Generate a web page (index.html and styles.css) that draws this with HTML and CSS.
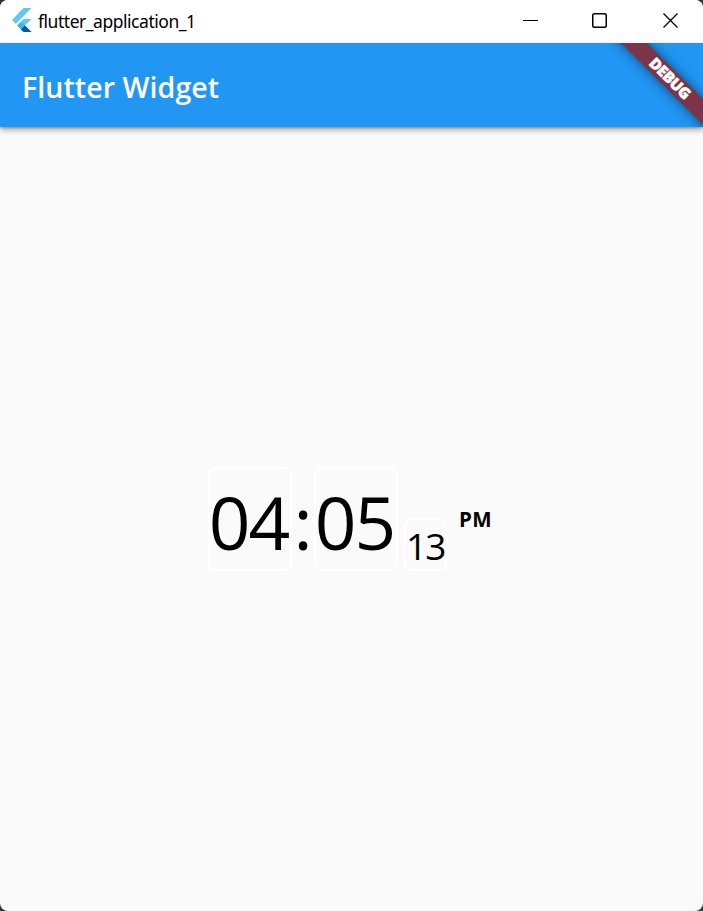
FILE: index.html
```html
<!DOCTYPE html>
<html lang="en">
<head>
<meta charset="utf-8">
<title>flutter_application_1</title>
<link rel="stylesheet" href="styles.css">
</head>
<body>
<div class="window">
  <header class="titlebar">
    <svg class="logo" width="20" height="24" viewBox="0 0 20 24">
      <path d="M11.5 0H19.5L3.8 15.8 0 12z" fill="#5ec8f8"/>
      <path d="M11.5 11H19.5L12.9 17.6 19.5 24H11.5L5.3 17.6z" fill="#5ec8f8"/>
      <path d="M5.3 17.6L9 13.9 12.9 17.6 9 21.4z" fill="#35b5f3"/>
      <path d="M9 21.4L12.9 17.6 19.5 24H11.5z" fill="#07589c"/>
    </svg>
    <span class="name">flutter_application_1</span>
    <div class="controls">
      <svg width="15" height="15" viewBox="0 0 15 15"><path d="M0 7.5H15" stroke="#000"/></svg>
      <svg width="15" height="15" viewBox="0 0 15 15"><rect x="0.75" y="0.75" width="13.5" height="13.5" rx="1.5" fill="none" stroke="#000" stroke-width="1.5"/></svg>
      <svg width="15" height="15" viewBox="0 0 15 15"><path d="M0.5 0.5L14.5 14.5M14.5 0.5L0.5 14.5" stroke="#000" stroke-width="1.3"/></svg>
    </div>
  </header>
  <div class="appbar">
    <h1>Flutter Widget</h1>
    <div class="banner"><div class="ribbon">DEBUG</div></div>
  </div>
  <main>
    <div class="clock">
      <div class="cell big">04</div>
      <div class="colon">:</div>
      <div class="cell big">05</div>
      <div class="cell small">13</div>
      <div class="period">PM</div>
    </div>
  </main>
</div>
</body>
</html>
```

FILE: styles.css
```css
* { box-sizing: border-box; }
body { margin: 0; background: #343434; font-family: "Open Sans", "Noto Sans", sans-serif; color: #000; }
.window { height: 911px; border-radius: 8px; overflow: hidden; background: #fafafa; display: flex; flex-direction: column; }
.titlebar { height: 43px; background: #fff; display: flex; align-items: center; padding: 0 25px 3px 12px; }
.logo { flex: none; }
.name { margin-left: 6px; font-family: "Noto Sans", sans-serif; font-size: 17.5px; line-height: 24px; letter-spacing: -0.47px; padding-top: 2px; white-space: nowrap; }
.controls { margin: 1px 0 0 auto; display: flex; gap: 54px; }
.controls svg { display: block; }
.controls svg:last-child { margin-left: 2px; }
.appbar { position: relative; height: 84px; flex: none; background: #2196f3; box-shadow: 0 3px 6px rgba(0,0,0,.32), 0 1px 2px rgba(0,0,0,.2); display: flex; align-items: center; padding-left: 22px; }
h1 { margin: 0; padding-top: 3px; font-size: 28.5px; line-height: 38px; font-weight: 600; letter-spacing: 0.08px; color: #fff; white-space: nowrap; }
.banner { position: absolute; top: 0; right: 0; width: 130px; height: 84px; overflow: hidden; }
.ribbon { position: absolute; left: -4.5px; top: 25.5px; width: 200px; height: 18px; transform: rotate(45deg); background: #7b3448; box-shadow: 0 0 12px rgba(0,0,0,.55); color: #fff; font-size: 15.3px; line-height: 17px; font-weight: 800; text-align: center; letter-spacing: -0.35px; padding-left: 2px; -webkit-text-stroke: 0.5px #fff; }
main { flex: 1; padding: 340px 0 0 208px; }
.clock { display: flex; align-items: flex-end; height: 104px; }
.cell { border: 2px solid #fff; border-radius: 8px; white-space: nowrap; }
.big { width: 84px; height: 104px; font-size: 73px; line-height: 106px; letter-spacing: -2px; text-indent: -1.3px; }
.colon { width: 22px; height: 104px; font-size: 73px; line-height: 110px; text-align: center; }
.small { width: 43px; height: 53px; margin-left: 6px; font-size: 37px; line-height: 51px; letter-spacing: -1.8px; }
.period { margin: 0 0 38px 12px; font-size: 20.5px; line-height: 28px; font-weight: 700; letter-spacing: 0.4px; }
```
